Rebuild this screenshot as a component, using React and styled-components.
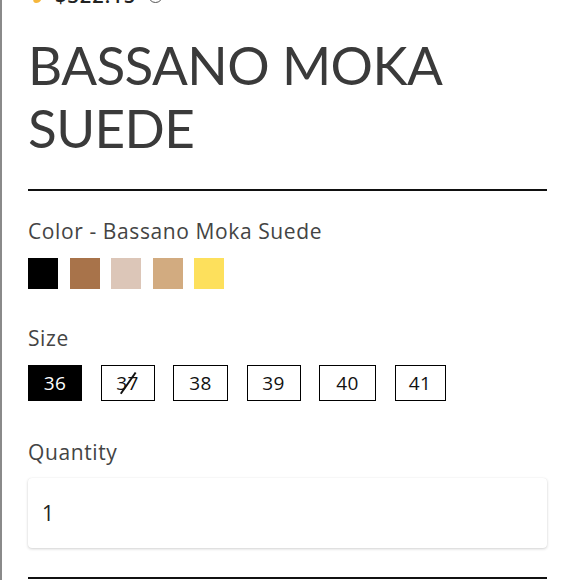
import React from "react";
import styled, { createGlobalStyle } from "styled-components";

const GlobalStyle = createGlobalStyle`
  html, body {
    margin: 0;
    padding: 0;
    background: #ffffff;
  }
  body {
    font-family: "Open Sans", "Liberation Sans", sans-serif;
  }
`;

const Page = styled.div`
  width: 580px;
  height: 580px;
  overflow: hidden;
  box-sizing: border-box;
  border-left: 2px solid #8a8a8a;
  padding: 0 33px 0 26px;
`;

const PriceRow = styled.div`
  display: flex;
  align-items: center;
  gap: 12px;
  height: 20px;
  margin-top: -15px;
  padding-left: 7px;
  color: #222;
  font-size: 20px;
`;

const Bolt = styled.span`
  width: 8px;
  height: 16px;
  background: #f6b73c;
  border-radius: 0 0 4px 4px;
  transform: skewX(-20deg);
`;

const Price = styled.span`
  font-weight: 600;
  letter-spacing: 1px;
`;

const InfoIcon = styled.span`
  width: 13px;
  height: 13px;
  border: 1.5px solid #555;
  border-radius: 50%;
`;

const Title = styled.h1`
  margin: 28px 0 0;
  font-family: "Lato", sans-serif;
  font-weight: 400;
  font-size: 53px;
  line-height: 63px;
  color: #3a3a3a;
  letter-spacing: -0.6px;
`;

const Rule = styled.hr`
  margin: ${(p) => p.$top}px 0 0;
  border: none;
  height: 2px;
  background: #111;
`;

const Label = styled.div`
  margin-top: ${(p) => p.$top}px;
  font-size: 21px;
  line-height: 28px;
  color: #444;
  letter-spacing: 0.6px;
`;

const Swatches = styled.div`
  display: flex;
  gap: 11.5px;
  margin-top: 13px;
`;

const Swatch = styled.div`
  width: 30px;
  height: 31px;
  background: ${(p) => p.color};
`;

const Sizes = styled.div`
  display: flex;
  gap: 18.5px;
  margin-top: 13px;
`;

const SizeBox = styled.div`
  position: relative;
  box-sizing: border-box;
  width: ${(p) => p.$w}px;
  height: 36px;
  display: flex;
  align-items: center;
  justify-content: center;
  border: 1.5px solid #000;
  background: ${(p) => (p.$active ? "#000" : "#fff")};
  color: ${(p) => (p.$active ? "#fff" : "#111")};
  font-size: 19px;
  letter-spacing: 0.5px;
`;

const Strike = styled.span`
  position: absolute;
  left: 50%;
  top: 50%;
  width: 26px;
  height: 1.5px;
  background: #111;
  transform: translate(-50%, -50%) rotate(-55deg);
`;

const QtyInput = styled.div`
  margin-top: 12px;
  height: 70px;
  box-sizing: border-box;
  display: flex;
  align-items: center;
  padding-left: 14px;
  background: #fff;
  border-radius: 4px;
  box-shadow: 0 1px 3px rgba(0, 0, 0, 0.18), 0 0 1px rgba(0, 0, 0, 0.08);
  font-size: 21px;
  color: #222;
`;

const colors = ["#000000", "#a8734a", "#dcc6b8", "#d2ab80", "#fde05c"];
const sizes = [
  { n: "36", w: 54, active: true },
  { n: "37", w: 54, out: true },
  { n: "38", w: 55 },
  { n: "39", w: 54 },
  { n: "40", w: 57 },
  { n: "41", w: 51 },
];

export default function App() {
  return (
    <Page>
      <GlobalStyle />
      <PriceRow>
        <Bolt />
        <Price>$322.15</Price>
        <InfoIcon />
      </PriceRow>
      <Title>
        BASSANO MOKA
        <br />
        SUEDE
      </Title>
      <Rule $top={30} />
      <Label $top={26}>Color - Bassano Moka Suede</Label>
      <Swatches>
        {colors.map((c) => (
          <Swatch key={c} color={c} />
        ))}
      </Swatches>
      <Label $top={35}>Size</Label>
      <Sizes>
        {sizes.map((s) => (
          <SizeBox key={s.n} $w={s.w} $active={s.active}>
            {s.n}
            {s.out && <Strike />}
          </SizeBox>
        ))}
      </Sizes>
      <Label $top={37}>Quantity</Label>
      <QtyInput>1</QtyInput>
      <Rule $top={29} />
    </Page>
  );
}
